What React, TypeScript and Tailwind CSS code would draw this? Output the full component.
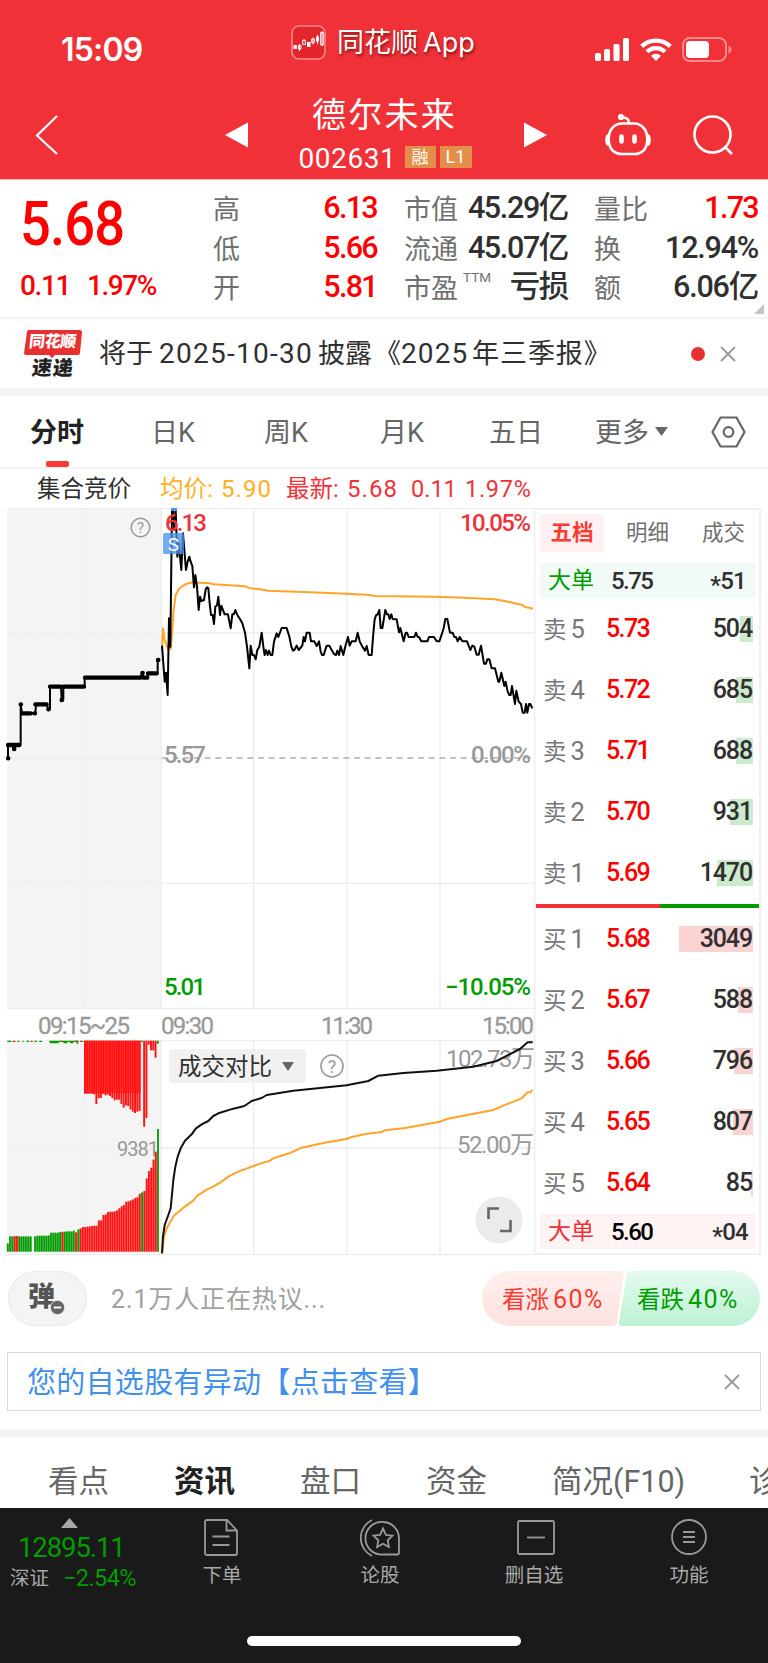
import type { ReactNode } from 'react';
import clsx from 'clsx';

type Level = { label: string; price: string; qty: string; bar: number };

const sells: Level[] = [
  { label: '卖5', price: '5.73', qty: '504', bar: 13 },
  { label: '卖4', price: '5.72', qty: '685', bar: 17 },
  { label: '卖3', price: '5.71', qty: '688', bar: 17 },
  { label: '卖2', price: '5.70', qty: '931', bar: 23 },
  { label: '卖1', price: '5.69', qty: '1470', bar: 36 },
];

const buys: Level[] = [
  { label: '买1', price: '5.68', qty: '3049', bar: 74 },
  { label: '买2', price: '5.67', qty: '588', bar: 15 },
  { label: '买3', price: '5.66', qty: '796', bar: 19 },
  { label: '买4', price: '5.65', qty: '807', bar: 20 },
  { label: '买5', price: '5.64', qty: '85', bar: 2 },
];

// Chart series are plotted at 3 units per pixel
const auctionLine =
  'M24 775V735H60M36 735L42 747L48 735M62 735V613L66 640H106L108 613H140L145 628L150 626V560H183L185 600L190 598V560H254V533H420L427 519L431 533H441L445 519H473V480';

const priceLine =
  '486,437 490,490 494,545 498,518 503,585 507,355 511,440 516,28 519,28 523,90 527,30 532,170 536,130 544,210 549,100 553,150 558,210 563,185 568,170 572,185 577,198 582,262 586,225 591,260 596,330 600,290 604,303 612,300 617,268 621,262 625,265 629,310 633,345 638,345 642,372 646,320 651,316 655,290 660,345 664,317 669,330 674,343 684,343 692,385 697,343 702,342 706,330 712,345 720,357 727,370 735,398 741,440 748,505 752,437 757,465 762,465 767,478 772,450 778,440 785,398 790,440 794,465 798,450 803,465 807,452 812,465 817,465 822,425 830,400 835,411 845,384 860,384 868,410 874,440 879,452 883,450 890,437 896,450 907,437 911,411 915,424 920,398 929,398 933,424 943,424 950,438 957,424 962,455 966,465 971,465 980,437 988,437 995,450 1002,462 1008,465 1012,452 1017,465 1022,438 1030,465 1037,435 1044,411 1049,437 1055,424 1067,424 1073,398 1079,424 1087,440 1095,452 1100,438 1106,465 1115,465 1120,400 1124,358 1128,346 1133,343 1138,330 1142,384 1147,384 1156,330 1161,343 1165,343 1169,357 1174,343 1178,357 1190,358 1197,397 1201,384 1211,424 1217,398 1221,398 1226,411 1243,411 1248,398 1253,411 1257,411 1264,424 1282,424 1287,411 1302,411 1310,424 1318,424 1325,404 1331,384 1336,357 1342,357 1350,398 1358,398 1363,411 1368,411 1373,424 1379,411 1387,424 1401,424 1411,450 1417,437 1423,440 1430,464 1436,464 1443,437 1452,491 1458,491 1462,478 1468,478 1475,505 1485,505 1495,545 1498,545 1504,518 1513,558 1517,545 1523,575 1528,585 1532,585 1536,558 1545,612 1549,572 1556,605 1563,612 1568,638 1574,638 1578,612 1582,638 1587,612 1591,612 1597,625';

const averageLine =
  '486,450 489,385 494,420 504,447 512,447 516,400 521,330 527,285 535,270 545,260 560,251 580,247 600,248 630,250 640,253 735,259 752,265 780,268 805,272 930,277 1040,281 1100,284 1125,288 1300,290 1390,293 1485,298 1525,305 1565,314 1577,322 1592,324 1598,327';

const todayVolume =
  '486,2260 489,2210 494,2175 505,2145 512,2125 520,2040 526,2000 533,1970 542,1945 555,1922 575,1903 587,1886 605,1873 625,1863 640,1848 655,1840 700,1826 733,1818 755,1803 785,1794 800,1785 880,1772 960,1764 1040,1756 1105,1743 1135,1727 1210,1719 1310,1712 1420,1700 1490,1683 1560,1647 1583,1627 1598,1627';

const prevVolume =
  '486,2260 492,2210 500,2185 522,2147 550,2123 580,2102 592,2087 622,2068 640,2060 660,2048 690,2027 715,2015 780,1991 808,1983 820,1975 870,1959 905,1943 970,1929 1040,1917 1055,1911 1100,1901 1145,1896 1155,1891 1215,1884 1320,1865 1340,1857 1390,1847 1480,1830 1510,1817 1565,1795 1583,1777 1592,1777 1597,1769';

const auctionBars = [
  25, 46, 46, 47, 47, 46, 46, 46, 46, 46, 46, 0, 46, 48, 48, 48, 48, 48, 49, 57, 57, 57, 57, 59, 60, 60, 61, 61, 61, 63,
  58, 67, 70, 74, 74, 75, 76, 77, 78, 78, 94, 94, 110, 112, 119, 120, 120, 121, 124, 130, 136, 140, 150, 151, 154, 157,
  161, 164, 174, 178, 182, 220, 242, 252, 276, 300, 368,
];
const greenBars = new Set([0, 1, 2, 5, 6, 7, 8, 9, 10, 12, 13, 14, 15, 16, 17, 18, 19, 20, 21, 22, 23, 25, 26, 27, 28, 29, 31, 59, 66]);

const hangingBars = [
  159, 159, 159, 159, 161, 190, 173, 172, 160, 164, 162, 166, 172, 179, 177, 177, 190, 201, 194, 196, 206, 213, 217, 213,
  211, 4, 258, 232, 12, 29, 29, 51, 9,
];

function Num({ children, className }: { children: ReactNode; className?: string }) {
  return <span className={clsx('font-medium', className)}>{children}</span>;
}

function Cross({ className }: { className?: string }) {
  return (
    <svg className={clsx('size-4', className)} viewBox="0 0 16 16" fill="none" stroke="#999" strokeWidth="1.800">
      <path d="M1 1l14 14M15 1L1 15" />
    </svg>
  );
}

function Header() {
  return (
    <header className="h-[180px] bg-[#f03138] text-white border-b border-[#f9b4b6]">
      <div className="relative h-[90px]">
        <div className="flex h-full items-center pl-[61px] pt-2">
          <span className="w-[534px] pt-[2px] font-['Inter'] text-[32px] font-semibold leading-none tracking-[-0.025em]">15:09</span>
          <svg className="h-[23px] w-[34px]" viewBox="0 0 34 23" fill="#fff">
            <rect x="0" y="15" width="6" height="8" rx="1.500" />
            <rect x="9" y="11" width="6" height="12" rx="1.500" />
            <rect x="18.500" y="6" width="6" height="17" rx="1.500" />
            <rect x="28" y="0" width="6" height="23" rx="1.500" />
          </svg>
          <svg className="ml-[11px] h-6 w-8" viewBox="0 0 32 24" fill="none" stroke="#fff" strokeWidth="4.400">
            <path d="M1.700 9.400a20.500 20.500 0 0 1 28.600 0" />
            <path d="M7 14.800a12.800 12.800 0 0 1 18 0" />
            <path d="M16 24l-5-5.200a7.400 7.400 0 0 1 10 0z" fill="#fff" stroke="none" />
          </svg>
          <svg className="ml-[10px] h-[25px] w-[50px]" viewBox="0 0 50 25">
            <rect x="1" y="1" width="43" height="23" rx="7" fill="none" stroke="#f98b8f" strokeWidth="2" />
            <rect x="4" y="4" width="23" height="17" rx="4" fill="#fff" />
            <path d="M46.500 8.500q3 1 3 4t-3 4z" fill="#f98b8f" />
          </svg>
        </div>
        <div className="absolute left-[291px] top-6 flex h-9 items-center">
          <svg className="size-[35px]" viewBox="0 0 35 35">
            <rect x="1" y="1" width="33" height="33" rx="7" fill="#e3262b" stroke="#f7888b" strokeWidth="1.600" />
            <g fill="#fff">
              <rect x="2.500" y="20" width="3.300" height="4" />
              <rect x="16" y="17" width="3.500" height="5" />
              <rect x="25" y="11.500" width="3" height="5" />
            </g>
            <g fill="none" stroke="#fff" strokeWidth="1">
              <path d="M8.500 19v7M7.300 20.500h2.600v3.500h-2.600zM13 14v2M11.700 15.500h2.600v4h-2.600zM22 12.500v7M20.700 14h2.600v3.500h-2.600zM26.500 10v9M31 6v15M29.700 7.500h2.600v12.500h-2.600z" />
            </g>
          </svg>
          <span className="ml-[11px] pt-px text-[27px] leading-none whitespace-nowrap [text-shadow:1px_2px_3px_rgba(90,0,0,0.7)]">
            同花顺<span className="ml-[5px] font-['Inter'] text-[27px]">App</span>
          </span>
        </div>
      </div>
      <div className="flex h-[89px] items-center">
        <svg className="ml-[35px] h-10 w-6" viewBox="0 0 24 40" fill="none" stroke="#fff" strokeWidth="2.200">
          <path d="M22 1L2 20.500L22 39" />
        </svg>
        <svg className="ml-[166px] h-[26px] w-[24px]" viewBox="0 0 24 26" fill="#fff">
          <path d="M0 13L23 .5v25z" />
        </svg>
        <div className="flex w-[274px] flex-col items-center">
          <div className="-ml-[3px] pt-px text-[34px] leading-[40px] tracking-[0.065em]">德尔未来</div>
          <div className="-ml-[2px] mt-[4px] flex items-center gap-[4px]">
            <span className="mr-[8px] w-[94px] pt-[3px] text-[28px] leading-[34px] tracking-[0.02em]">002631</span>
            <span className="h-[22px] w-[31px] bg-[#e38f49] text-center text-[17px] leading-[22px]">融</span>
            <span className="h-[22px] w-8 bg-[#e38f49] text-center text-[18px] leading-[22px]">L1</span>
          </div>
        </div>
        <svg className="h-[26px] w-[24px]" viewBox="0 0 24 26" fill="#fff">
          <path d="M24 13L1 .5v25z" />
        </svg>
        <svg className="ml-[58px] h-[42px] w-[46px]" viewBox="0 0 46 42" fill="none" stroke="#fff" strokeWidth="2.600" strokeLinecap="round">
          <path d="M17 9.500H29C37 9.500 42.300 16 42.300 25C42.300 35 37 40 29 40H17C9 40 3.700 35 3.700 25C3.700 16 9 9.500 17 9.500Z" />
          <path d="M23.500 9C24.500 5 21 3.500 17 3.500" />
          <circle cx="16" cy="3" r="1.800" fill="#fff" />
          <path d="M2.500 21.500Q0.500 26 2.500 30.500M43.500 21.500Q45.500 26 43.500 30.500" />
          <path d="M16.500 22.500v5M29.500 22.500v5" strokeWidth="4.600" />
        </svg>
        <svg className="ml-[42px] h-10 w-10" viewBox="0 0 40 40" fill="none" stroke="#fff" strokeWidth="2.600">
          <circle cx="19.500" cy="19.500" r="18" />
          <path d="M32 32l7 7" />
        </svg>
      </div>
    </header>
  );
}

function Stats() {
  return (
    <section className="relative flex h-[139px] border-b-2 border-[#f3f3f3] text-[27px] text-[#707070]">
      <div className="w-[213px] text-[#ff0000]">
        <div className="ml-5 mt-[13px] origin-left scale-x-[0.89] text-[61px] font-medium leading-[62px] tracking-[-0.015em]">5.68</div>
        <div className="ml-5 mt-[15px] flex gap-[17px] text-[28px] leading-8">
          <Num className="tracking-[-0.05em]">0.11</Num>
          <Num className="tracking-[-0.05em]">1.97%</Num>
        </div>
      </div>
      <div className="mt-2 w-[164px] leading-[39px]">
        {[['高', '6.13'], ['低', '5.66'], ['开', '5.81']].map(([label, value]) => (
          <div key={label} className="flex h-[39.500px] justify-between">
            <span className="pt-[3px]">{label}</span>
            <Num className="text-[30.500px] tracking-[-0.055em] text-[#ff0000]">{value}</Num>
          </div>
        ))}
      </div>
      <div className="ml-[27px] mt-2 w-[164px] leading-[39px]">
        {[['市值', '45.29亿'], ['流通', '45.07亿'], ['市盈', '亏损']].map(([label, value]) => (
          <div key={label} className="flex h-[39.500px] justify-between whitespace-nowrap">
            <span className="pt-[3px]">
              {label}
              {label === '市盈' && <sup className="-top-[16px] ml-[5px] text-[13.500px] leading-none">TTM</sup>}
            </span>
            <Num className="text-[30.500px] tracking-[-0.045em] text-[#303030]">{value}</Num>
          </div>
        ))}
      </div>
      <div className="ml-[26px] mt-2 w-[164px] leading-[39px]">
        {[['量比', '1.73'], ['换', '12.94%'], ['额', '6.06亿']].map(([label, value], i) => (
          <div key={label} className="flex h-[39.500px] justify-between whitespace-nowrap">
            <span className="pt-[3px]">{label}</span>
            <Num className={clsx('text-[30.500px]', i === 0 ? 'tracking-[-0.055em] text-[#ff0000]' : 'tracking-[-0.04em] text-[#303030]')}>{value}</Num>
          </div>
        ))}
      </div>
      <svg className="absolute bottom-[3px] right-1 size-[10px]" viewBox="0 0 10 10" fill="#c4c4c4">
        <path d="M10 0v10H0z" />
      </svg>
    </section>
  );
}

function News() {
  return (
    <section className="flex h-[77px] items-center border-b-8 border-[#f4f4f4]">
      <div className="ml-6 w-[58px]">
        <div className="relative flex h-[25px] items-center justify-center">
          <svg className="absolute inset-0 h-[29px] w-[58px]" viewBox="0 0 58 29" fill="#e93030">
            <path d="M5 0H56q2 0 2 2L56 23q0 2-2 2H31l-3 3-3-3H2q-2 0-2-2L3 2q0-2 2-2z" />
          </svg>
          <span className="relative -skew-x-6 text-[16px] font-black leading-none tracking-[-0.02em] text-white">同花顺</span>
        </div>
        <div className="mt-[3px] -skew-x-6 text-center text-[20px] font-black leading-5 tracking-[0.05em] text-[#222]">速递</div>
      </div>
      <div className="ml-[17px] flex w-[592px] whitespace-nowrap text-[27px] leading-9 text-[#303030]">
        <span>将于</span>
        <span className="ml-[6px] w-[159px] text-[28px] tracking-[0.045em]">2025-10-30</span>
        <span>披露</span>
        <span className="ml-[2px]">《</span>
        <span className="w-[71px] text-[28px] tracking-[0.04em]">2025</span>
        <span className="tracking-[0.035em]">年三季报</span>
        <span>》</span>
      </div>
      <span className="size-[14px] rounded-full bg-[#e93030]" />
      <Cross className="ml-[15px]" />
    </section>
  );
}

function PeriodTabs() {
  return (
    <nav className="flex h-[73px] items-center border-b-2 border-[#f3f3f3] text-[27px] text-[#666] whitespace-nowrap">
      <div className="relative ml-[30px] w-[121px] pt-[3px] font-bold text-[#222]">
        分时
        <span className="absolute left-4 top-[51px] h-[6px] w-[23px] rounded-[2px] bg-[#fb3a30]" />
      </div>
      <span className="w-[113px] pt-[3px]">日K</span>
      <span className="w-[116px] pt-[3px]">周K</span>
      <span className="w-[109px] pt-[3px]">月K</span>
      <span className="w-[106px] pt-[3px]">五日</span>
      <span className="w-[60px] pt-[3px]">更多</span>
      <svg className="h-[9px] w-[13px]" viewBox="0 0 13 9" fill="#666">
        <path d="M0 0h13L6.500 9z" />
      </svg>
      <svg className="ml-[43px] h-8 w-[35px]" viewBox="0 0 35 32" fill="none" stroke="#666" strokeWidth="2.200">
        <path d="M9.500 1.500H25.500L33.500 16L25.500 30.500H9.500L1.500 16z" />
        <circle cx="17.500" cy="16" r="4.800" />
      </svg>
    </nav>
  );
}

function Legend() {
  return (
    <div className="flex h-[39px] items-center whitespace-nowrap text-[23.500px] leading-6 text-[#f03138]">
      <span className="ml-[37px] w-[123px] text-[#303030]">集合竞价</span>
      <span className="w-[126px] text-[#ffb01e]">
        均价<span className="text-[24px] tracking-[0.045em]">: 5.90</span>
      </span>
      <span className="w-[125px]">
        最新<span className="text-[24px] tracking-[0.045em]">: 5.68</span>
      </span>
      <span className="w-[54px]">0.11</span>
      <span className="tracking-[0.03em]">1.97%</span>
    </div>
  );
}

function Chart() {
  return (
    <div className="relative w-[536px]">
      <svg className="block h-[748px] w-[536px] font-['Roboto','Noto_Sans_CJK_SC',sans-serif]" viewBox="0 508 536 748">
        <g transform="translate(0 500) scale(0.33333)">
          <path d="M22 24H484V1525H22zM22 1622H484V2264H22z" fill="#f4f4f4" />
          <g fill="none" stroke="#ededed" strokeWidth="4">
            <path d="M22 25H1608M22 1525H1608M22 1622H1608M22 2264H1608M484 399H1603M484 1150H1603M484 1944H1603" />
            <path d="M484 24V1525M484 1622V2264M761 24V1525M761 1622V2264M1041 24V1525M1041 1622V2264M1320 24V1525M1320 1622V2264M1604 24V2264" />
            <path d="M254 24V1525M254 1622V2264M22 404H484M22 774H484M22 1150H484M22 1944H484" strokeDasharray="4 6" strokeWidth="3" stroke="#e9e9e9" />
          </g>
          <path d="M486 774H1600" stroke="#b0b0b0" strokeWidth="4" strokeDasharray="18 14" />
        </g>
        <g fontSize="24" fontWeight="500" fill="#999">
          <text x="164" y="763" textLength="42">5.57</text>
          <text x="471" y="763" textLength="60">0.00%</text>
          <text x="117" y="1156" fontSize="20" fontWeight="400" textLength="42">9381</text>
        </g>
        <g transform="translate(0 500) scale(0.33333)" fill="none" strokeLinejoin="round">
          <path d={auctionLine} stroke="#000" strokeWidth="6" />
          <path
            d="M24 735H58M66 640H92M104 640H105M106 613H140M150 560H182M190 560H252M255 533H422M430 533H442M444 520H470M24 775h1M42 747h1M62 613h1M145 628h1M185 600h1M427 519h1M474 480h1"
            stroke="#000"
            strokeWidth="13"
            strokeLinecap="round"
          />
          <polyline points={averageLine} stroke="#ffa428" strokeWidth="6" />
          <polyline points={priceLine} stroke="#000" strokeWidth="6" />
        </g>
        <g fontSize="24" fontWeight="500">
          <text x="165" y="531" fill="#f03138" textLength="42">6.13</text>
          <text x="460" y="531" fill="#f03138" textLength="71">10.05%</text>
          <text x="164" y="995" fill="#009c00" textLength="42">5.01</text>
          <text x="445" y="995" fill="#009c00" textLength="86">−10.05%</text>
        </g>
        <g fontSize="24" fill="#999" stroke="#999" strokeWidth="0.300">
          <text x="38" y="1034" textLength="92">09:15~25</text>
          <text x="161" y="1034" textLength="53">09:30</text>
          <text x="321" y="1034" textLength="52">11:30</text>
          <text x="482" y="1034" textLength="52">15:00</text>
        </g>
        <rect x="163" y="533" width="21" height="21" rx="1.500" fill="#4b94ee" fillOpacity="0.780" />
        <rect x="171" y="508" width="6" height="3" fill="#4b94ee" />
        <text x="173.500" y="551" fontSize="19" fill="#fff" textAnchor="middle">S</text>
        <circle cx="140.500" cy="527.500" r="9.300" fill="none" stroke="#999" strokeWidth="1.500" />
        <text x="140.500" y="533" fontSize="15" fill="#999" textAnchor="middle">?</text>
        <g transform="translate(0 500) scale(0.33333)">
          {auctionBars.map((h, i) => (
            <rect key={i} x={20.500 + i * 6.830} y={2255 - h} width="5.400" height={h} fill={greenBars.has(i) ? '#009c00' : '#ff1212'} />
          ))}
          {auctionBars.map((h, i) => (
            <rect key={i} x={25.500 + i * 6.830} y={2257 - h} width="2" height={i === 66 ? 0 : Math.max(h - 2, 0)} fill={greenBars.has(i) ? '#009c00' : '#ff1212'} fillOpacity="0.7" />
          ))}
          <rect x="253" y="1622" width="169" height="158" fill="#ff1212" fillOpacity="0.7" />
          {hangingBars.map((h, i) => (
            <rect key={i} x={252 + i * 6.830} y="1622" width="5.800" height={h} fill={i === 25 || i === 32 ? '#009c00' : '#ff1212'} />
          ))}
          <path d="M22 1624h12M52 1624h6M67 1624h4M80 1624h8M103 1624h8M118 1624h8M148 1624h88M244 1624h6" stroke="#009c00" strokeWidth="4" />
          <path d="M150 1627h26M190 1627h12M210 1627h10M232 1622v9" stroke="#009c00" strokeWidth="5" />
          <path d="M38 1624h8M92 1624h6M182 1624h5M225 1624h5M240 1624h4" stroke="#ff1212" strokeWidth="4" />
        </g>
        <g fontSize="24" fill="#999">
          <text x="446" y="1067" textLength="89">102.73万</text>
          <text x="457" y="1153" textLength="77">52.00万</text>
        </g>
        <g transform="translate(0 500) scale(0.33333)" fill="none" strokeLinejoin="round">
          <polyline points={prevVolume} stroke="#ffa428" strokeWidth="6" />
          <polyline points={todayVolume} stroke="#111" strokeWidth="6" />
        </g>
        <circle cx="332" cy="1066" r="11" fill="none" stroke="#999" strokeWidth="1.600" />
        <text x="332" y="1072.500" fontSize="18" fill="#999" textAnchor="middle">?</text>
        <circle cx="499" cy="1220" r="23.500" fill="#ebebeb" />
        <path d="M488.500 1219v-10.500H499M500 1231h10.500V1220" fill="none" stroke="#666" strokeWidth="2.600" />
      </svg>
      <button className="absolute left-[169px] top-[541px] flex h-[34px] w-[137px] items-center rounded bg-[#f1f1f1] pl-[9px] text-[23.500px] text-[#333]">
        <span className="pt-[3px]">成交对比</span>
        <svg className="ml-[10px] h-[9px] w-[12px]" viewBox="0 0 12 9" fill="#666">
          <path d="M0 0h12L6 9z" />
        </svg>
      </button>
    </div>
  );
}

function BookRow({ level, side }: { level: Level; side: 'sell' | 'buy' }) {
  return (
    <div className="flex h-[61.200px] items-center text-[23.500px] leading-[30px]">
      <span className="w-[70px] pl-[7px] pt-px text-[#777]">
        {level.label[0]}
        <span className="ml-[4px] text-[25.500px]">{level.label[1]}</span>
      </span>
      <Num className="w-[52px] text-[25px] tracking-[-0.065em] text-[#ff0000]">{level.price}</Num>
      <div className="relative h-[26px] flex-1">
        <div
          className={clsx('absolute right-[6px] top-0 h-full', side === 'sell' ? 'bg-[#cceacc]' : 'bg-[#fcd3d3]')}
          style={{ width: level.bar }}
        />
        <Num className="absolute right-[7px] top-[-2px] text-[25px] tracking-[-0.045em] text-[#303030]">{level.qty}</Num>
      </div>
    </div>
  );
}

function OrderBook() {
  return (
    <aside className="flex h-[747px] w-[225px] flex-col border-y-2 border-r-2 border-[#f0f0f0]">
      <div className="flex h-[45px] items-center text-[21.500px] leading-none text-[#707070]">
        <span className="ml-[4px] mr-[22px] flex h-[38px] w-[64px] items-center justify-center rounded bg-[#fff1f1] font-bold text-[#fb3a30]">五档</span>
        <span className="w-[76px]">明细</span>
        <span>成交</span>
      </div>
      <div className="ml-1 mr-[3px] mt-[8px] flex h-[35px] items-center bg-[#f1faf6] pl-[8px] pr-[10px] text-[23px] text-[#303030]">
        <span className="w-[63px] pt-[2px] text-[#009c00]">大单</span>
        <Num className="text-[24px] tracking-[-0.065em]">5.75</Num>
        <Num className="ml-auto flex items-center text-[24px] tracking-[-0.03em]">
          <span className="h-4 leading-6">*</span>51
        </Num>
      </div>
      {sells.map((level) => (
        <BookRow key={level.label} level={level} side="sell" />
      ))}
      <div className="flex h-1 shrink-0">
        <div className="w-[124px] bg-[#f03138]" />
        <div className="flex-1 bg-[#009c00]" />
      </div>
      {buys.map((level) => (
        <BookRow key={level.label} level={level} side="buy" />
      ))}
      <div className="mb-[4px] ml-1 mr-[3px] mt-auto flex h-[35px] shrink-0 items-center bg-[#fff3f3] pl-[8px] pr-[8px] text-[23px] text-[#303030]">
        <span className="w-[63px] pt-[2px] text-[#f03138]">大单</span>
        <Num className="text-[24px] tracking-[-0.065em] text-black">5.60</Num>
        <Num className="ml-auto flex items-center text-[24px] tracking-[-0.03em]">
          <span className="h-4 leading-6">*</span>04
        </Num>
      </div>
    </aside>
  );
}

function Sentiment() {
  return (
    <section className="flex h-[97px] items-start whitespace-nowrap pt-4">
      <button className="relative ml-2 h-[55px] w-[79px] rounded-full border border-[#e9e9e9] bg-[#f4f4f4] pb-1 pr-3 text-center text-[27px] font-black leading-[50px] text-[#555]">
        弹
        <svg className="absolute left-[41px] top-[28px] size-[15px]" viewBox="0 0 14 14">
          <circle cx="7" cy="7" r="6.700" fill="#666" stroke="#f4f4f4" strokeWidth="0.800" />
          <path d="M3.500 7h7" stroke="#fff" strokeWidth="1.800" />
        </svg>
      </button>
      <span className="ml-6 w-[371px] text-[25px] leading-[57px] tracking-[0.035em] text-[#a0a0a0]">2.1万人正在热议...</span>
      <div className="relative h-[55px] w-[279px]">
        <svg className="absolute inset-0 size-full" viewBox="0 0 279 55">
          <defs>
            <linearGradient id="up" x2="0" y2="1">
              <stop stopColor="#ffefee" />
              <stop offset="1" stopColor="#fde2e0" />
            </linearGradient>
            <linearGradient id="down" x2="0" y2="1">
              <stop stopColor="#e4faef" />
              <stop offset="1" stopColor="#bcf1d4" />
            </linearGradient>
          </defs>
          <path d="M27.500 0H139q3 0 2.700 3L135 51q-.5 4-4.500 4H27.500a27.500 27.500 0 0 1 0-55z" fill="url(#up)" />
          <path d="M149 0H250.500a27.500 27.500 0 0 1 0 55H140q-3.500 0-3-4L144.500 4q.5-4 4.500-4z" fill="url(#down)" />
        </svg>
        <div className="relative flex text-[23.500px] leading-[57px]">
          <span className="ml-5 w-[135px] text-[#fb3a30]">
            看涨<span className="ml-[4px] text-[25px] tracking-[0.06em]">60%</span>
          </span>
          <span className="text-[#009c00]">
            看跌<span className="ml-[4px] text-[25px] tracking-[0.06em]">40%</span>
          </span>
        </div>
      </div>
    </section>
  );
}

function BottomBar() {
  return (
    <footer className="absolute inset-x-0 bottom-0 h-[155px] bg-[#1a1a1a] text-[#a9a9a9]">
      <div className="flex h-[90px] items-start text-[19.500px] leading-6">
        <div className="flex w-[140px] flex-col pt-[10px]">
          <svg className="ml-[61px] h-[10px] w-[17px]" viewBox="0 0 17 10" fill="#a9a9a9">
            <path d="M8.500 0L17 10H0z" />
          </svg>
          <span className="ml-[18px] mt-[5px] text-[27.500px] leading-[30px] tracking-[-0.04em] text-[#009c00]">12895.11</span>
          <span className="ml-[10px] mt-[2px] flex items-center whitespace-nowrap">
            <span className="pt-[2px]">深证</span>
            <span className="ml-[14px] text-[23.500px] tracking-[-0.025em] text-[#009c00]">−2.54%</span>
          </span>
        </div>
        <div className="ml-[34px] w-[96px] pt-[11px] text-center">
          <svg className="ml-[30px] h-[37px] w-[34px]" viewBox="0 0 34 37" fill="none" stroke="#999" strokeWidth="1.800">
            <path d="M3 1H23L33 11.500V34q0 2-2 2H3q-2 0-2-2V3q0-2 2-2zM22.500 1V11.500H33M8.500 17.500H25.500M8.500 26H25.500" />
          </svg>
          <div className="mt-[8px]">下单</div>
        </div>
        <div className="ml-[62px] w-[96px] pt-[11px] text-center">
          <svg className="mx-auto h-[38px] w-[40px]" viewBox="0 0 40 38" fill="none" stroke="#999" strokeWidth="1.800">
            <path d="M12 1A20 20 0 0 0 12 37M23 3A16.300 16.300 0 1 0 23 35.500H37q2 0 2-2V19A16.300 16.300 0 0 0 23 3z" />
            <path d="M23 9.500l2.900 6.300 6.600.8-4.800 4.700 1.200 6.800L23 24.800l-5.900 3.300 1.200-6.800-4.800-4.700 6.600-.8z" />
          </svg>
          <div className="mt-[7px]">论股</div>
        </div>
        <div className="ml-[58px] w-[96px] pt-[12px] text-center">
          <svg className="ml-[31px] h-[35px] w-[38px]" viewBox="0 0 38 35" fill="none" stroke="#999" strokeWidth="1.800">
            <rect x="1" y="1" width="36" height="33" rx="1.500" />
            <path d="M10 17.500H28" />
          </svg>
          <div className="mt-[9px]">删自选</div>
        </div>
        <div className="ml-[59px] w-[96px] pt-[11px] text-center">
          <svg className="mx-auto size-[36px]" viewBox="0 0 36 36" fill="none" stroke="#999" strokeWidth="1.800">
            <circle cx="18" cy="18" r="17" />
            <path d="M12 13h12M12 18h12M12 23h12" />
          </svg>
          <div className="mt-[9px]">功能</div>
        </div>
      </div>
      <div className="mx-auto mt-[38px] h-[10px] w-[274px] rounded-full bg-white" />
    </footer>
  );
}

export default function App() {
  return (
    <div className="relative h-[1663px] w-[768px] overflow-hidden bg-white font-['Roboto','Noto_Sans_CJK_SC',sans-serif]">
      <Header />
      <Stats />
      <News />
      <PeriodTabs />
      <Legend />
      <div className="flex h-[747px] items-start">
        <Chart />
        <OrderBook />
      </div>
      <Sentiment />
      <div className="mx-[7px] flex h-[59px] items-center border border-[#d9d9d9] pl-[19px] pr-[20px] text-[29px] tracking-[0.01em] text-[#428fee]">
        <span className="pt-[4px]">您的自选股有异动【点击查看】</span>
        <Cross className="ml-auto" />
      </div>
      <nav className="mt-[18px] flex h-[100px] whitespace-nowrap border-t-8 border-[#f4f4f4] text-[30.500px] leading-[89px] text-[#666] *:shrink-0">
        <span className="ml-[48px] w-[126px]">看点</span>
        <span className="w-[126px] font-bold text-[#222]">资讯</span>
        <span className="w-[126px]">盘口</span>
        <span className="w-[126px]">资金</span>
        <span className="w-[197px]">简况(F10)</span>
        <span>诊</span>
      </nav>
      <BottomBar />
    </div>
  );
}
